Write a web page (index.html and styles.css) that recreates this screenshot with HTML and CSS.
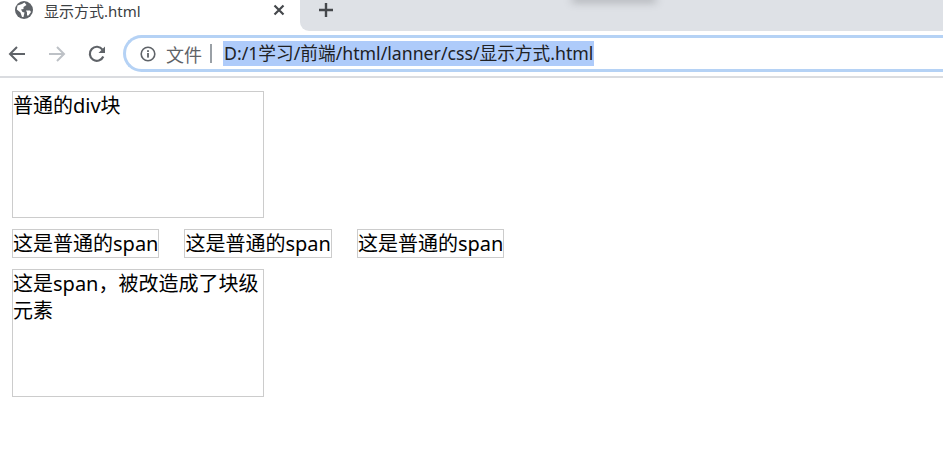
FILE: index.html
```html
<!DOCTYPE html>
<html lang="zh-CN">
<head>
    <meta charset="UTF-8">
    <meta name="viewport" content="width=device-width, initial-scale=1.0">
    <title>显示方式.html</title>
    <link rel="stylesheet" href="styles.css">
</head>
<body>

    <div class="tab-strip">
        <div class="tab">
            <svg class="tab-globe" width="18" height="18" viewBox="0 0 18 18">
                <circle cx="9" cy="9" r="9" fill="#5f6368"/>
                <path d="M2.5 4.5 L7 3 L9.5 1.5 L11.5 4 L8.5 6 L8.5 8 L6 8.5 L7.5 11 L9.5 11.5 L8.5 16 L7 16 L5.5 11.5 L1.8 8.5 Z" fill="#fff"/>
                <path d="M11 9.5 L15 9.5 L16 11 L13.5 14.5 L12 14.5 L12 11.5 Z" fill="#fff"/>
            </svg>
            <span class="tab-title">显示方式.html</span>
            <svg class="tab-close" width="12" height="12" viewBox="0 0 12 12">
                <path d="M1.5 1.5 L10.5 10.5 M10.5 1.5 L1.5 10.5" stroke="#45484c" stroke-width="2.2" fill="none"/>
            </svg>
        </div>
        <div class="tab-rest">
            <svg class="new-tab" width="14" height="14" viewBox="0 0 14 14">
                <path d="M7 0 V14 M0 7 H14" stroke="#45484c" stroke-width="2.4" fill="none"/>
            </svg>
            <div class="smudge"></div>
        </div>
    </div>

    <div class="toolbar">
        <svg class="nav-icon" width="18" height="18" viewBox="0 0 18 18">
            <path d="M17 9 H2 M9 2 L2 9 L9 16" stroke="#5f6368" stroke-width="2" fill="none"/>
        </svg>
        <svg class="nav-icon" width="18" height="18" viewBox="0 0 18 18">
            <path d="M1 9 H16 M9 2 L16 9 L9 16" stroke="#bdc1c6" stroke-width="2" fill="none"/>
        </svg>
        <svg class="nav-icon" width="18" height="18" viewBox="0 0 18 18">
            <path d="M15.3 11.5 A7 7 0 1 1 14.5 4.6" stroke="#5f6368" stroke-width="2.2" fill="none"/>
            <path d="M17 1.5 V8 H10.5 Z" fill="#5f6368"/>
        </svg>
        <div class="omnibox">
            <svg class="info-icon" width="16" height="16" viewBox="0 0 16 16">
                <circle cx="8" cy="8" r="6.8" stroke="#5f6368" stroke-width="1.6" fill="none"/>
                <rect x="7.1" y="7" width="1.8" height="4.6" fill="#5f6368"/>
                <rect x="7.1" y="4.2" width="1.8" height="1.8" fill="#5f6368"/>
            </svg>
            <span class="scheme">文件</span>
            <span class="divider"></span>
            <span class="url">D:/1学习/前端/html/lanner/css/显示方式.html</span>
        </div>
    </div>

    <div class="content">
        <div class="box">普通的div块</div>
        <div class="span-row">
            <span class="plain">这是普通的span</span>
            <span class="plain">这是普通的span</span>
            <span class="plain">这是普通的span</span>
        </div>
        <span class="box block-span">这是span，被改造成了块级元素</span>
    </div>

</body>
</html>
```

FILE: styles.css
```css
html, body {
    margin: 0;
    padding: 0;
    height: 100%;
    overflow: hidden;
    background-color: #fff;
}
body {
    font-family: "Noto Sans", "Noto Sans CJK SC", sans-serif;
}

/* barra de pestañas */
.tab-strip {
    display: flex;
    height: 31px;
    background-color: #fff;
}
.tab {
    display: flex;
    align-items: center;
    width: 300px;
    flex-shrink: 0;
    box-sizing: border-box;
    padding: 0 15px 11px 15px;
}
.tab-title {
    margin-left: 11px;
    font-size: 15px;
    color: #3c4043;
    flex: 1;
}
.tab-rest {
    position: relative;
    flex: 1;
    display: flex;
    align-items: center;
    padding: 0 0 11px 19px;
    background-color: #dee1e6;
    border-bottom-left-radius: 9px;
    overflow: hidden;
}
.smudge {
    position: absolute;
    top: -6px;
    left: 272px;
    width: 84px;
    height: 6px;
    box-shadow: 0 2px 8px rgba(60, 64, 67, 0.35);
}

/* barra de navegación */
.toolbar {
    display: flex;
    align-items: center;
    gap: 22px;
    height: 45px;
    padding: 0 0 0 8px;
    border-bottom: 2px solid #dadce0;
    background-color: #fff;
}
.nav-icon {
    flex-shrink: 0;
}
.omnibox {
    display: flex;
    align-items: center;
    flex: 1;
    height: 31px;
    margin-left: -5px;
    padding-left: 14px;
    border: 3px solid #b5d2f5;
    border-right: none;
    border-radius: 20px 0 0 20px;
}
.info-icon {
    margin-right: 10px;
}
.scheme {
    font-size: 18px;
    color: #5f6368;
}
.divider {
    width: 2px;
    height: 19px;
    margin: 0 11px 0 8px;
    background-color: #9aa0a6;
}
.url {
    padding: 0 1px;
    line-height: 25px;
    font-size: 17.7px;
    color: #202124;
    background-color: #aecbfa;
}

/* contenido */
.content {
    padding: 13px 0 0 12px;
    font-size: 20px;
    line-height: 27px;
    color: #000;
}
.box {
    display: block;
    box-sizing: border-box;
    width: 252px;
    height: 127px;
    border: 1px solid #ccc;
}
.span-row {
    display: flex;
    gap: 25px;
    margin: 11px 0;
}
.plain {
    border: 1px solid #ccc;
}
.block-span {
    height: 128px;
}
```
